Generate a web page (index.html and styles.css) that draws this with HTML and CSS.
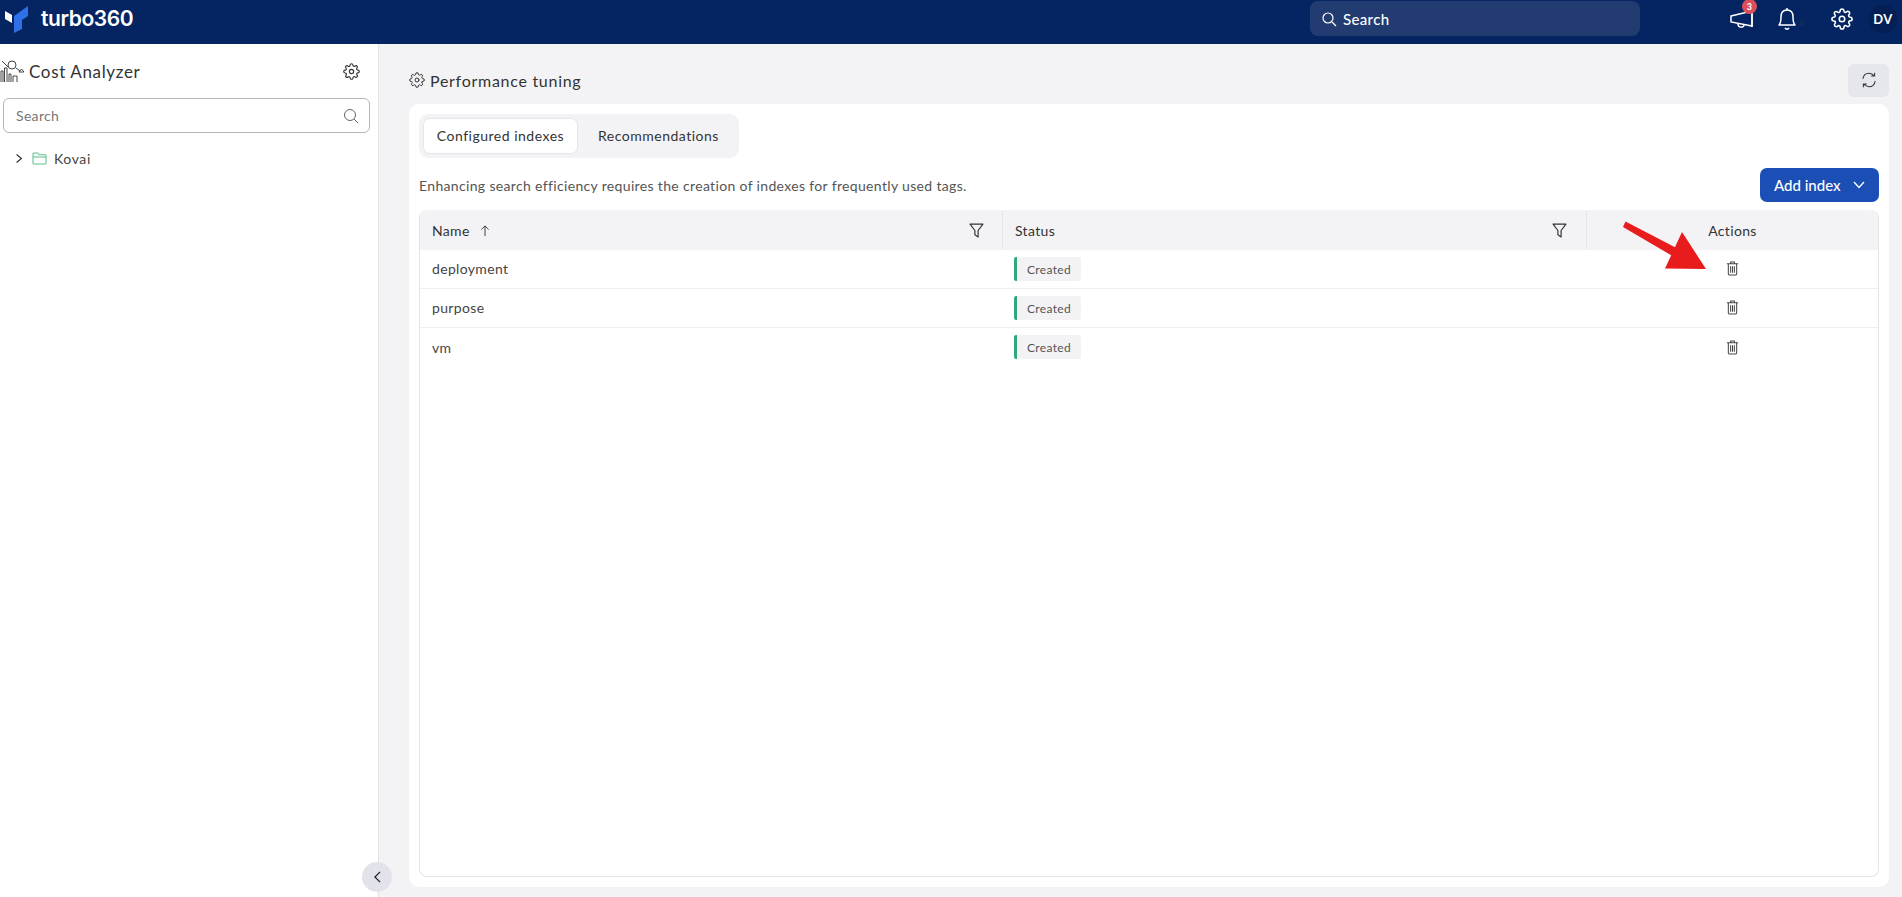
FILE: index.html
```html
<!DOCTYPE html>
<html lang="en">
<head>
  <meta charset="UTF-8">
  <meta name="viewport" content="width=device-width, initial-scale=1.0">
  <title>Turbo360 - Performance tuning</title>
  <link rel="stylesheet" href="styles.css">
</head>
<body>

  <!-- Top bar -->
  <header class="topbar">
    <div class="brand">
      <svg class="brand-logo" viewBox="0 0 24 28" width="24" height="28">
        <path d="M0 6 L7 10 V18 L0 14 Z" fill="#ffffff"/>
        <path d="M9 11 L23 1 V11 L17 15 V24 L9 28 Z" fill="#2f6fe8"/>
      </svg>
      <span class="brand-name">turbo360</span>
    </div>
    <div class="top-search">
      <svg class="icon" viewBox="0 0 16 16" width="16" height="16"><circle cx="7" cy="7" r="5" fill="none" stroke="#fff" stroke-width="1.2"/><path d="M11 11 L15 15" stroke="#fff" stroke-width="1.2"/></svg>
      <span>Search</span>
    </div>
    <div class="top-icons">
      <div class="top-icon megaphone">
        <svg viewBox="0 0 26 22" width="26" height="22" fill="none" stroke="#fff" stroke-width="1.5"><path d="M2 8 L23 3 V18 L2 14 Z"/><path d="M23 2 V19"/><path d="M9 16 C9 20 15 20 15 17"/></svg>
        <span class="badge">3</span>
      </div>
      <div class="top-icon bell">
        <svg viewBox="0 0 20 24" width="20" height="24" fill="none" stroke="#fff" stroke-width="1.5" stroke-linejoin="round"><path d="M2 18 C4 16 4 14 4 10 C4 6 6 3 10 3 C14 3 16 6 16 10 C16 14 16 16 18 18 Z"/><path d="M10 1 V3"/><path d="M8 21 C9 22.500 11 22.500 12 21"/></svg>
        <span class="bell-count">6</span>
      </div>
      <div class="top-icon gear">
        <svg viewBox="0 0 24 24" width="22" height="22" fill="none" stroke="#fff" stroke-width="1.7" stroke-linecap="round" stroke-linejoin="round"><circle cx="12" cy="12" r="3"/><path d="M19.400 15a1.650 1.650 0 0 0 .33 1.820l.06.06a2 2 0 1 1-2.830 2.830l-.06-.06a1.650 1.650 0 0 0-2.820 1.170V21a2 2 0 1 1-4 0v-.09a1.650 1.650 0 0 0-2.830-1.170l-.06.06a2 2 0 1 1-2.830-2.830l.06-.06a1.650 1.650 0 0 0-1.170-2.820H3a2 2 0 1 1 0-4h.09a1.650 1.650 0 0 0 1.170-2.830l-.06-.06a2 2 0 1 1 2.830-2.830l.06.06a1.650 1.650 0 0 0 1.820.33H9a1.650 1.650 0 0 0 1-1.510V3a2 2 0 1 1 4 0v.09a1.650 1.650 0 0 0 2.830 1.170l.06-.06a2 2 0 1 1 2.830 2.830l-.06.06a1.650 1.650 0 0 0-.33 1.820V9a1.650 1.650 0 0 0 1.510 1H21a2 2 0 1 1 0 4h-.09a1.650 1.650 0 0 0-1.510 1z"/></svg>
      </div>
      <div class="avatar">DV</div>
    </div>
  </header>

  <div class="layout">

    <!-- Left tree -->
    <aside class="sidebar">
      <div class="side-head">
        <div class="side-title">
          <svg viewBox="0 0 24 24" width="24" height="24" fill="none" stroke="#444" stroke-width="1"><path d="M1 23 V12 H3 V23 M4.500 23 V9 H7 V23 M9 23 V15 H11 V23 M13 23 V17 H17 V23"/><circle cx="12" cy="6" r="4"/><path d="M2 2 L8 8 M16 9 L20 12 M19 13 H24 L21.500 10 Z"/></svg>
          <span>Cost Analyzer</span>
        </div>
        <svg viewBox="0 0 24 24" width="17" height="17" fill="none" stroke="#333" stroke-width="1.600" stroke-linecap="round" stroke-linejoin="round"><circle cx="12" cy="12" r="3"/><path d="M19.400 15a1.650 1.650 0 0 0 .33 1.820l.06.06a2 2 0 1 1-2.830 2.830l-.06-.06a1.650 1.650 0 0 0-2.820 1.170V21a2 2 0 1 1-4 0v-.09a1.650 1.650 0 0 0-2.830-1.170l-.06.06a2 2 0 1 1-2.830-2.830l.06-.06a1.650 1.650 0 0 0-1.170-2.820H3a2 2 0 1 1 0-4h.09a1.650 1.650 0 0 0 1.170-2.830l-.06-.06a2 2 0 1 1 2.830-2.830l.06.06a1.650 1.650 0 0 0 1.820.33H9a1.650 1.650 0 0 0 1-1.510V3a2 2 0 1 1 4 0v.09a1.650 1.650 0 0 0 2.830 1.170l.06-.06a2 2 0 1 1 2.830 2.830l-.06.06a1.650 1.650 0 0 0-.33 1.820V9a1.650 1.650 0 0 0 1.510 1H21a2 2 0 1 1 0 4h-.09a1.650 1.650 0 0 0-1.510 1z"/></svg>
      </div>
      <div class="side-search">
        <span>Search</span>
        <svg viewBox="0 0 16 16" width="16" height="16"><circle cx="7" cy="7" r="5.500" fill="none" stroke="#666" stroke-width="1"/><path d="M11 11 L15 15" stroke="#666" stroke-width="1"/></svg>
      </div>
      <div class="tree-row">
        <svg viewBox="0 0 10 12" width="8" height="11" fill="none" stroke="#333" stroke-width="1.500"><path d="M2 1 L8 6 L2 11"/></svg>
        <svg class="folder" viewBox="0 0 16 14" width="15" height="13" fill="none" stroke="#5cc08e" stroke-width="1.100"><path d="M1 12 V2 Q1 1 2 1 H6 L7.500 3 H14 Q15 3 15 4 V12 Q15 13 14 13 H2 Q1 13 1 12 Z M1 5.500 H15"/></svg>
        <span>Kovai</span>
      </div>
    </aside>

    <!-- Main content -->
    <main class="content">
      <div class="page-head">
        <div class="page-title">
          <svg viewBox="0 0 24 24" width="16" height="16" fill="none" stroke="#333" stroke-width="1.500" stroke-linecap="round" stroke-linejoin="round"><circle cx="12" cy="12" r="3"/><path d="M19.400 15a1.650 1.650 0 0 0 .33 1.820l.06.06a2 2 0 1 1-2.830 2.830l-.06-.06a1.650 1.650 0 0 0-2.820 1.170V21a2 2 0 1 1-4 0v-.09a1.650 1.650 0 0 0-2.830-1.170l-.06.06a2 2 0 1 1-2.830-2.830l.06-.06a1.650 1.650 0 0 0-1.170-2.820H3a2 2 0 1 1 0-4h.09a1.650 1.650 0 0 0 1.170-2.830l-.06-.06a2 2 0 1 1 2.830-2.830l.06.06a1.650 1.650 0 0 0 1.820.33H9a1.650 1.650 0 0 0 1-1.510V3a2 2 0 1 1 4 0v.09a1.650 1.650 0 0 0 2.830 1.170l.06-.06a2 2 0 1 1 2.830 2.830l-.06.06a1.650 1.650 0 0 0-.33 1.820V9a1.650 1.650 0 0 0 1.510 1H21a2 2 0 1 1 0 4h-.09a1.650 1.650 0 0 0-1.510 1z"/></svg>
          <span>Performance tuning</span>
        </div>
        <button class="refresh">
          <svg viewBox="0 0 16 16" width="18" height="18" fill="none" stroke="#333" stroke-width="0.900"><path d="M2.500 7 C3 4 5 2 8 2 C10 2 11.500 3 13 4.500 M13 1.500 V4.500 H10"/><path d="M13.500 9 C13 12 11 14 8 14 C6 14 4.500 13 3 11.500 M3 14.500 V11.500 H6"/></svg>
        </button>
      </div>

      <section class="card">
        <div class="tabs">
          <div class="tab active">Configured indexes</div>
          <div class="tab">Recommendations</div>
        </div>

        <div class="toolbar">
          <p>Enhancing search efficiency requires the creation of indexes for frequently used tags.</p>
          <button class="add-btn">
            <span>Add index</span>
            <svg viewBox="0 0 12 8" width="12" height="8" fill="none" stroke="#fff" stroke-width="1.300"><path d="M1 1 L6 6.500 L11 1"/></svg>
          </button>
        </div>

        <div class="grid">
          <div class="grid-head">
            <div class="cell col-name">
              <span>Name</span>
              <svg class="sort" viewBox="0 0 10 12" width="10" height="11" fill="none" stroke="#333" stroke-width="1"><path d="M5 12 V1 M1 5 L5 1 L9 5"/></svg>
              <svg class="filter" viewBox="0 0 14 14" width="15" height="15" fill="none" stroke="#333" stroke-width="1.100" stroke-linejoin="round"><path d="M1 1 H13 L8.500 7 V13 L5.500 11 V7 Z"/></svg>
            </div>
            <div class="cell col-status">
              <span>Status</span>
              <svg class="filter" viewBox="0 0 14 14" width="15" height="15" fill="none" stroke="#333" stroke-width="1.100" stroke-linejoin="round"><path d="M1 1 H13 L8.500 7 V13 L5.500 11 V7 Z"/></svg>
            </div>
            <div class="cell col-actions">Actions</div>
          </div>

          <div class="grid-row">
            <div class="cell col-name">deployment</div>
            <div class="cell col-status"><span class="chip">Created</span></div>
            <div class="cell col-actions">
              <svg class="trash" viewBox="0 0 14 16" width="13" height="15" fill="none" stroke="#444" stroke-width="1.100"><path d="M1 3 H13 M5 3 V1 H9 V3 M2.500 3 V14 Q2.500 15 3.500 15 H10.500 Q11.500 15 11.500 14 V3 M5 5.500 V12.500 M7 5.500 V12.500 M9 5.500 V12.500"/></svg>
            </div>
          </div>
          <div class="grid-row">
            <div class="cell col-name">purpose</div>
            <div class="cell col-status"><span class="chip">Created</span></div>
            <div class="cell col-actions">
              <svg class="trash" viewBox="0 0 14 16" width="13" height="15" fill="none" stroke="#444" stroke-width="1.100"><path d="M1 3 H13 M5 3 V1 H9 V3 M2.500 3 V14 Q2.500 15 3.500 15 H10.500 Q11.500 15 11.500 14 V3 M5 5.500 V12.500 M7 5.500 V12.500 M9 5.500 V12.500"/></svg>
            </div>
          </div>
          <div class="grid-row last">
            <div class="cell col-name">vm</div>
            <div class="cell col-status"><span class="chip">Created</span></div>
            <div class="cell col-actions">
              <svg class="trash" viewBox="0 0 14 16" width="13" height="15" fill="none" stroke="#444" stroke-width="1.100"><path d="M1 3 H13 M5 3 V1 H9 V3 M2.500 3 V14 Q2.500 15 3.500 15 H10.500 Q11.500 15 11.500 14 V3 M5 5.500 V12.500 M7 5.500 V12.500 M9 5.500 V12.500"/></svg>
            </div>
          </div>
        </div>
      </section>
    </main>
  </div>

  <!-- Sidebar collapse handle -->
  <button class="collapse">
    <svg viewBox="0 0 10 14" width="9" height="12" fill="none" stroke="#222" stroke-width="1.500"><path d="M8 1 L2 7 L8 13"/></svg>
  </button>

  <!-- Red annotation arrow -->
  <svg class="annotation" viewBox="0 0 90 50" width="90" height="50">
    <path d="M1 2 L3.500 -3.500 L66 29 L59 36 Z" fill="#e81c1c"/>
    <path d="M60 7 L84 44 L43 43.500 Z" fill="#e81c1c"/>
  </svg>

</body>
</html>
```

FILE: styles.css
```css
/* Page */
* {
  box-sizing: border-box;
}

html, body {
  margin: 0;
  height: 100%;
  overflow: hidden;
}

body {
  font-family: "Lato", "Noto Sans", sans-serif;
  letter-spacing: 0.34px;
  color: #333;
  background-color: #f3f3f6;
}

/* Top bar */
.topbar {
  display: flex;
  align-items: center;
  height: 44px;
  padding-bottom: 7px;
  background-color: #042561;
  color: white;
}

.brand {
  display: flex;
  align-items: center;
  width: 1310px;
  padding-left: 5px;
}

.brand-logo {
  margin-right: 12px;
}

.brand-name {
  font-family: "Inter", sans-serif;
  font-size: 21px;
  font-weight: 600;
  letter-spacing: -0.4px;
}

.top-search {
  display: flex;
  align-items: center;
  gap: 6px;
  width: 330px;
  height: 35px;
  padding-left: 11px;
  background-color: #223c72;
  border-radius: 8px;
  font-size: 15px;
  font-weight: 500;
}

.top-icons {
  display: flex;
  align-items: center;
  margin-left: auto;
  padding-right: 5px;
}

.top-icon {
  position: relative;
  display: flex;
  align-items: center;
}

.megaphone {
  margin-right: 22px;
}

.bell {
  margin-right: 34px;
}

.gear {
  margin-right: 16px;
}

.badge {
  position: absolute;
  top: -9px;
  left: 13px;
  width: 15px;
  height: 15px;
  background-color: #d9505c;
  border-radius: 50%;
  font-size: 9px;
  font-weight: 700;
  line-height: 15px;
  text-align: center;
}

.bell-count {
  position: absolute;
  top: 9px;
  left: 22px;
  font-size: 10px;
  color: #1c3159;
}

.avatar {
  width: 28px;
  height: 28px;
  background-color: #041f54;
  border-radius: 50%;
  font-size: 13px;
  font-weight: 700;
  line-height: 29px;
  text-align: center;
}

.layout {
  display: flex;
  height: 853px;
}

/* Left tree */
.sidebar {
  width: 379px;
  padding: 0 8px 0 0;
  background-color: white;
  border-right: 1px solid #e2e2e6;
}

.side-head {
  display: flex;
  align-items: center;
  justify-content: space-between;
  height: 54px;
  padding-right: 10px;
}

.side-title {
  display: flex;
  align-items: center;
  gap: 5px;
  font-size: 17px;
  letter-spacing: 0.65px;
  color: #333;
}

.side-search {
  display: flex;
  align-items: center;
  justify-content: space-between;
  height: 35px;
  margin-left: 3px;
  padding: 0 10px 0 12px;
  border: 1px solid #b5b5b5;
  border-radius: 6px;
  font-size: 14px;
  color: #777;
}

.tree-row {
  display: flex;
  align-items: center;
  margin-top: 17px;
  padding-left: 15px;
  font-size: 14px;
  letter-spacing: 0.6px;
  color: #444;
}

.folder {
  margin: 0 7px 0 9px;
}

/* Main content */
.content {
  flex: 1;
  padding: 0 13px 10px 30px;
  display: flex;
  flex-direction: column;
}

.page-head {
  display: flex;
  align-items: center;
  justify-content: space-between;
  height: 60px;
  padding-top: 12px;
}

.page-title {
  display: flex;
  align-items: center;
  gap: 5px;
  font-size: 16px;
  letter-spacing: 0.72px;
  color: #333;
}

.refresh {
  display: flex;
  align-items: center;
  justify-content: center;
  width: 41px;
  height: 33px;
  margin-top: 0;
  background-color: #e6e7ec;
  border: none;
  border-radius: 6px;
}

.card {
  flex: 1;
  display: flex;
  flex-direction: column;
  padding: 10px;
  background-color: white;
  border-radius: 10px;
}

/* Tabs */
.tabs {
  display: flex;
  width: 320px;
  height: 44px;
  padding: 4px;
  background-color: #f3f3f6;
  border-radius: 9px;
  font-size: 14px;
  letter-spacing: 0.5px;
}

.tab {
  display: flex;
  align-items: center;
  padding: 0 0 2px 20px;
  color: #333;
}

.tab.active {
  width: 155px;
  justify-content: center;
  padding: 0 0 2px;
  background-color: white;
  border: 1px solid #e6e6ea;
  border-radius: 7px;
}

.toolbar {
  display: flex;
  align-items: center;
  justify-content: space-between;
  height: 34px;
  margin-top: 10px;
  margin-bottom: 8px;
}

.toolbar p {
  margin: 0;
  font-size: 14px;
  color: #555;
}

.add-btn {
  display: flex;
  align-items: center;
  gap: 12px;
  width: 119px;
  height: 34px;
  padding: 0 0 0 14px;
  background-color: #1b4fb5;
  color: white;
  border: none;
  border-radius: 7px;
  font-family: inherit;
  font-size: 15px;
  font-weight: 500;
}

/* Table */
.grid {
  flex: 1;
  border: 1px solid #e4e4e8;
  border-top: none;
  border-radius: 8px;
  font-size: 14px;
}

.grid-head {
  display: flex;
  height: 40px;
  padding-top: 1px;
  background-color: #f3f3f6;
  border-radius: 8px 8px 0 0;
  color: #333;
}

.grid-row {
  display: flex;
  height: 39px;
  padding-bottom: 1px;
  border-bottom: 1px solid #efeff2;
  color: #444;
}

.grid-row.last {
  border-bottom: none;
}

.cell {
  display: flex;
  align-items: center;
}

.col-name {
  width: 582px;
  padding: 0 18px 0 12px;
}

.col-status {
  width: 584px;
  padding: 0 19px 0 12px;
}

.col-actions {
  flex: 1;
  justify-content: center;
  padding-right: 0;
}

.grid-head .col-status,
.grid-head .col-actions {
  border-left: 1px solid #e6e6ea;
}

.sort {
  margin-left: 10px;
}

.filter {
  margin-left: auto;
}

.chip {
  display: inline-block;
  height: 24px;
  padding: 0 10px;
  background-color: #f3f3f6;
  border-left: 3px solid #2fa87c;
  border-radius: 2px;
  font-size: 12px;
  line-height: 25px;
  color: #555;
}

/* Overlays */
.collapse {
  position: absolute;
  top: 862px;
  left: 362px;
  display: flex;
  align-items: center;
  justify-content: center;
  width: 30px;
  height: 30px;
  padding: 0;
  background-color: #e2e3ea;
  border: none;
  border-radius: 50%;
}

.annotation {
  position: absolute;
  top: 225px;
  left: 1622px;
  overflow: visible;
}
```
